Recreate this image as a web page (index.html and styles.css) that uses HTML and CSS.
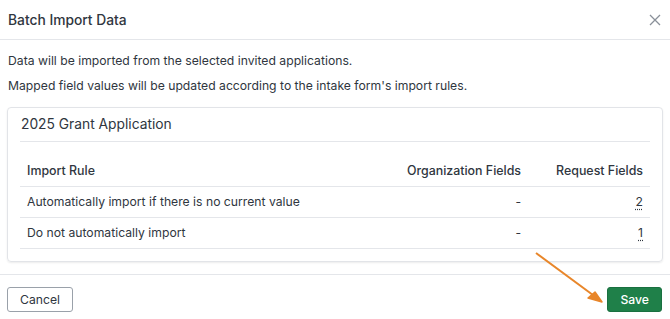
FILE: index.html
```html
<!DOCTYPE html>
<html>
  <head>
    <title>Batch Import Data</title>
    <link rel="stylesheet" href="styles.css">
  </head>
  <body>
    <div class="modal">
      <header class="modal-header">
        <h2>Batch Import Data</h2>
        <button class="close" aria-label="Close">
          <svg width="12" height="12" viewBox="0 0 12 12"><path d="M1 1L11 11M11 1L1 11" stroke="#8a9099" stroke-width="1.3" fill="none"/></svg>
        </button>
      </header>

      <section class="modal-body">
        <p>Data will be imported from the selected invited applications.</p>
        <p>Mapped field values will be updated according to the intake form's import rules.</p>

        <div class="card">
          <h3>2025 Grant Application</h3>
          <table>
            <thead>
              <tr>
                <th>Import Rule</th>
                <th class="num">Organization Fields</th>
                <th class="num">Request Fields</th>
              </tr>
            </thead>
            <tbody>
              <tr>
                <td>Automatically import if there is no current value</td>
                <td class="num">-</td>
                <td class="num"><a href="#" class="count">2</a></td>
              </tr>
              <tr>
                <td>Do not automatically import</td>
                <td class="num">-</td>
                <td class="num"><a href="#" class="count">1</a></td>
              </tr>
            </tbody>
          </table>
        </div>
      </section>

      <footer class="modal-footer">
        <button class="btn">Cancel</button>
        <button class="btn btn-save">Save</button>
      </footer>

      <svg class="arrow" width="80" height="60" viewBox="0 0 80 60">
        <path d="M2 2L63 47" stroke="#e8862a" stroke-width="2" fill="none"/>
        <path d="M68 51L54 47L61 41Z" fill="#e8862a" stroke="#e8862a" stroke-width="1.5" stroke-linejoin="round"/>
      </svg>
    </div>
  </body>
</html>
```

FILE: styles.css
```css
* { box-sizing: border-box; }
body {
  margin: 0;
  background: white;
  font-family: "Inter", "Liberation Sans", sans-serif;
  font-size: 12.2px;
  color: #2f3640;
}
.modal {
  position: relative;
  width: 670px;
  height: 319px;
}
.modal-header {
  display: flex;
  justify-content: space-between;
  align-items: center;
  height: 40px;
  padding: 0 8px;
  border-bottom: 1px solid #e4e6ea;
}
.modal-header h2 {
  margin: 0;
  font-size: 13.8px;
  font-weight: 500;
}
.close {
  border: 0;
  background: none;
  padding: 0;
  margin-right: 1px;
  display: flex;
}
.modal-body {
  padding: 13px 7px 12px;
}
.modal-body p {
  margin: 0 0 9px 1px;
  line-height: 16px;
}
.modal-body p + p {
  margin-bottom: 13px;
}
.card {
  border: 1px solid #e2e4e8;
  border-radius: 4px;
  box-shadow: 0 1px 2px rgba(0, 0, 0, 0.08);
  padding: 0 12px 12px;
}
.card h3 {
  margin: 0;
  font-size: 13.8px;
  font-weight: 400;
  line-height: 33px;
  border-bottom: 1px solid #e4e6ea;
  padding-left: 1px;
}
table {
  width: 100%;
  border-collapse: collapse;
  margin-top: 13px;
}
th,
td {
  text-align: left;
  padding: 0 7px;
  height: 31px;
  border-bottom: 1px solid #e4e6ea;
}
th {
  font-size: 12.4px;
  font-weight: 500;
}
td {
  font-weight: 400;
}
.num {
  text-align: right;
}
th.num:nth-child(2) {
  width: 160px;
}
th.num:nth-child(3) {
  width: 122px;
}
.count {
  color: #2f3640;
  text-decoration: underline dotted;
  text-underline-offset: 3px;
}
.modal-footer {
  display: flex;
  justify-content: space-between;
  align-items: center;
  border-top: 1px solid #e4e6ea;
  padding: 12px 8px 0 7px;
}
.btn {
  font-family: inherit;
  font-size: 12.2px;
  color: #2f3640;
  background: white;
  border: 1px solid #9aa1aa;
  border-radius: 3px;
  height: 25px;
  padding: 0 12px;
}
.btn-save {
  background: #1f8049;
  border-color: #1a7040;
  color: white;
  font-weight: 500;
  padding: 0 12px;
}
.arrow {
  position: absolute;
  left: 534px;
  top: 251px;
}
```
